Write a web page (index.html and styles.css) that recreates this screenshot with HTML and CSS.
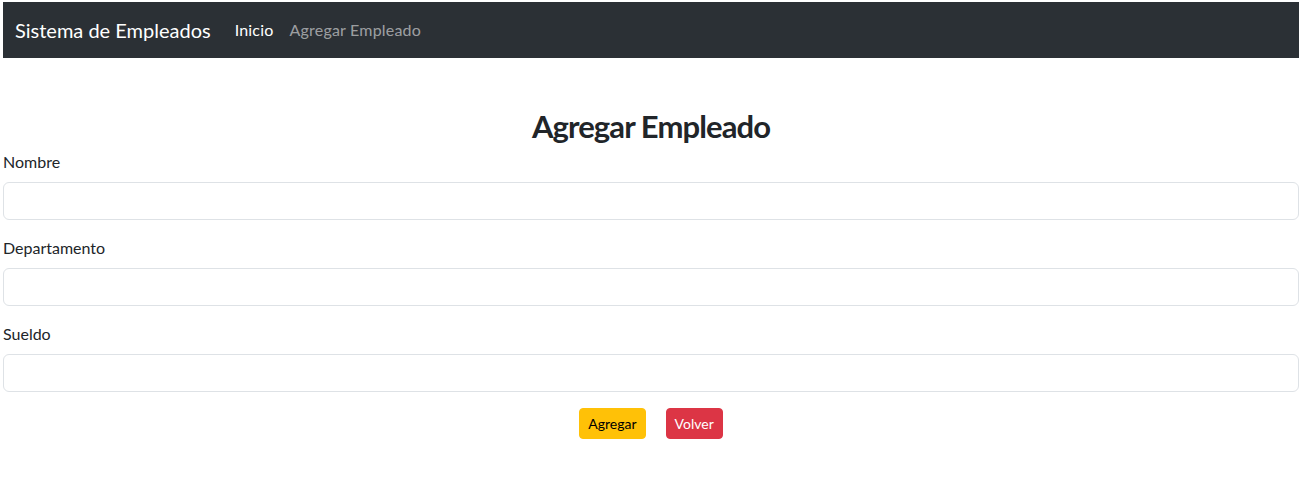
FILE: index.html
```html
<!DOCTYPE html>
<html lang="es">
<head>
<meta charset="utf-8">
<title>Agregar Empleado</title>
<link rel="stylesheet" href="styles.css">
</head>
<body>
<div class="page">
  <nav class="navbar">
    <span class="brand">Sistema de Empleados</span>
    <ul class="nav">
      <li><a class="nav-link active" href="#">Inicio</a></li>
      <li><a class="nav-link" href="#">Agregar Empleado</a></li>
    </ul>
  </nav>
  <main class="content">
    <h2 class="title">Agregar Empleado</h2>
    <form class="form">
      <div class="field">
        <label class="label" for="nombre">Nombre</label>
        <input class="input" id="nombre" type="text">
      </div>
      <div class="field">
        <label class="label" for="depto">Departamento</label>
        <input class="input" id="depto" type="text">
      </div>
      <div class="field">
        <label class="label" for="sueldo">Sueldo</label>
        <input class="input" id="sueldo" type="text">
      </div>
      <div class="actions">
        <button class="btn btn-warning" type="button">Agregar</button>
        <button class="btn btn-danger" type="button">Volver</button>
      </div>
    </form>
  </main>
</div>
</body>
</html>
```
FILE: styles.css
```css
* { box-sizing: border-box; }
html, body { margin: 0; padding: 0; background: #fff; }
body {
  font-family: Lato, "Open Sans", "Liberation Sans", sans-serif;
  color: #212529;
  font-size: 16px;
  line-height: 1.5;
}
.page {
  margin: 2px 8px 0 3px;
}
.navbar {
  background: #2b3035;
  height: 56px;
  display: flex;
  align-items: center;
  padding: 0 12px;
}
.brand {
  font-size: 20px;
  color: #fff;
  margin-right: 16px;
  line-height: 30px;
}
.nav {
  list-style: none;
  display: flex;
  margin: 0;
  padding: 0;
}
.nav-link {
  display: block;
  padding: 8px;
  color: rgba(255,255,255,0.55);
  text-decoration: none;
  letter-spacing: 0.2px;
}
.nav-link.active { color: #fff; }
.content {
  padding-top: 49px;
}
.title {
  text-align: center;
  font-size: 31px;
  font-weight: 700;
  letter-spacing: -0.9px;
  line-height: 38px;
  margin: 0 0 5px;
}
.field { margin-bottom: 16px; }
.label {
  display: block;
  margin-bottom: 8px;
}
.input {
  display: block;
  width: 100%;
  height: 38px;
  border: 1px solid #dee2e6;
  border-radius: 6px;
  padding: 6px 12px;
  font: inherit;
}
.actions {
  display: flex;
  justify-content: center;
  gap: 20px;
}
.btn {
  font: inherit;
  font-size: 14px;
  line-height: 1.5;
  padding: 4px 8px;
  border-radius: 4px;
  border: 1px solid transparent;
  height: 31px;
}
.btn-warning { background: #ffc107; border-color: #ffc107; color: #000; }
.btn-danger { background: #dc3545; border-color: #dc3545; color: #fff; }
```
